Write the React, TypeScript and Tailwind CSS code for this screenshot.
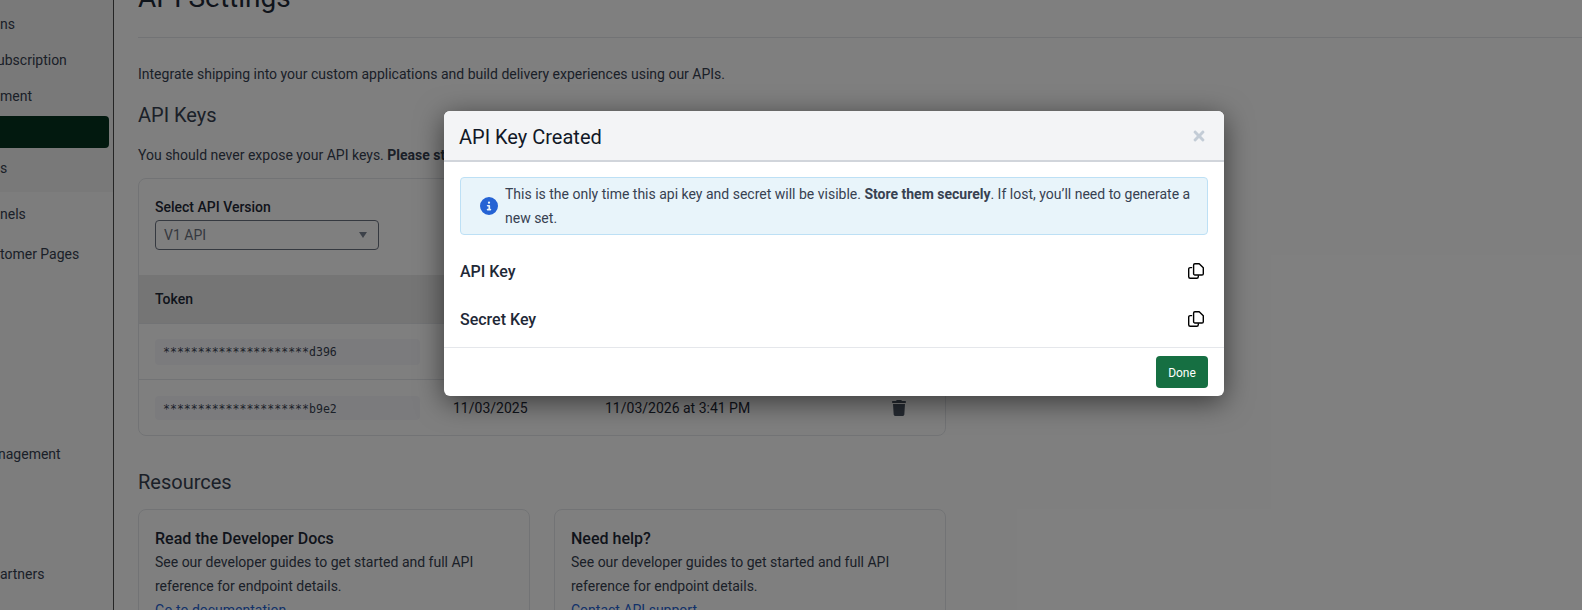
import { FaTimes } from "react-icons/fa";
import { FaCircleInfo, FaTrash } from "react-icons/fa6";

const TOKENS = [
    { token: "*********************d396", created: "11/03/2025", expires: "11/03/2026 at 3:41 PM", height: "h-[56px]", pill: "h-[26px]" },
    { token: "*********************b9e2", created: "11/03/2025", expires: "11/03/2026 at 3:41 PM", height: "h-[57px]", pill: "h-[24px]" },
];

const RESOURCES = [
    { title: "Read the Developer Docs", link: "Go to documentation" },
    { title: "Need help?", link: "Contact API support" },
];

function CopyIcon() {
    return (
        <svg className="mr-1 -mt-[2px]" width="16" height="16" viewBox="0 0 16 16" fill="none" stroke="#000" strokeWidth="1.4" strokeLinejoin="round" strokeLinecap="round">
            <path d="M5.6 2a1.3 1.3 0 0 1 1.3-1.3h4.3l4.1 4.1v5.9a1.3 1.3 0 0 1-1.3 1.3H6.9a1.3 1.3 0 0 1-1.3-1.3z" />
            <path d="M3.6 4.6H2.2A1.5 1.5 0 0 0 .7 6.1v7.7a1.5 1.5 0 0 0 1.5 1.5h6.6a1.5 1.5 0 0 0 1.5-1.5v-1" />
        </svg>
    );
}

function Sidebar() {
    return (
        <aside className="h-[610px] w-[114px] shrink-0 overflow-hidden border-r border-[#4a4a4a] bg-[#fafafa] text-sm text-[#374151]">
            <div className="h-[192px] bg-[#f3f3f3] pt-[14px]">
                <p className="h-5 leading-5">ns</p>
                <p className="mt-4 -ml-[3px] h-5 leading-5">ubscription</p>
                <p className="mt-4 h-5 leading-5">ment</p>
                <div className="mt-[10px] mr-[4px] h-[32px] rounded-r bg-[#04331f]"></div>
                <p className="mt-[10px] h-5 leading-5">s</p>
            </div>
            <p className="mt-3 h-5 leading-5">nels</p>
            <p className="mt-5 h-5 leading-5">tomer Pages</p>
            <p className="mt-[180px] -ml-[2px] h-5 leading-5">nagement</p>
            <p className="mt-[100px] h-5 leading-5">artners</p>
        </aside>
    );
}

function ApiKeysCard() {
    return (
        <div className="mt-3 h-[258px] w-[808px] overflow-hidden rounded-lg border border-[#e5e7eb] bg-white">
            <div className="px-4 pt-[18px]">
                <p className="h-5 text-sm leading-5 font-medium text-[#1f2937]">Select API Version</p>
                <div className="mt-[3px] flex h-[30px] w-[224px] items-center justify-between rounded border border-[#6b7280] px-2 text-sm text-[#6b7280]">
                    <span>V1 API</span>
                    <span className="mr-[3px] size-0 border-x-[4.5px] border-t-[6px] border-x-transparent border-t-[#7b8494]"></span>
                </div>
            </div>
            <div className="mt-[25px] grid h-[48px] grid-cols-[298px_152px_286px_1fr] items-center bg-[#ebebeb] pl-4 text-sm font-medium text-[#1f2937]">
                <span>Token</span>
                <span>Created</span>
                <span>Expires</span>
            </div>
            {TOKENS.map((row, index) => (
                <div
                    key={index}
                    className={`grid ${row.height} grid-cols-[298px_152px_286px_1fr] items-center border-t border-[#e5e7eb] pl-4 text-sm text-[#1f2937]`}
                >
                    <div className={`flex ${row.pill} w-[265px] items-center rounded bg-[#f6f7fa] px-2 pt-[2px] font-["DejaVu_Sans_Mono",monospace] text-[11.55px] text-[#374151]`}>
                        {row.token}
                    </div>
                    <span>{row.created}</span>
                    <span>{row.expires}</span>
                    <FaTrash className="size-4 text-[#4b5563]" />
                </div>
            ))}
        </div>
    );
}

function CreatedModal() {
    return (
        <div className="absolute inset-0 bg-black/50">
            <div className="absolute top-[111px] left-[444px] w-[780px] overflow-hidden rounded-md bg-white shadow-[0_6px_28px_rgba(0,0,0,0.55)]">
                <div className="flex h-[51px] items-center justify-between border-b-2 border-[#d1d5db] bg-[#f3f4f6] pr-[17px] pl-[15px]">
                    <h3 className="pt-[2px] text-xl text-[#111827]">API Key Created</h3>
                    <FaTimes className="size-[16px] text-[#c3ccd6]" />
                </div>
                <div className="px-4 pt-[15px]">
                    <div className="flex h-[58px] items-center gap-[7px] rounded border border-[#bde0f5] bg-[#e8f4fa] pr-4 pl-[19px] text-sm leading-6 text-[#374151]">
                        <FaCircleInfo className="size-[18px] shrink-0 text-[#2563d4]" />
                        <p>
                            This is the only time this api key and secret will be visible. <strong className="font-bold">Store them securely</strong>. If lost, you’ll need to generate a new set.
                        </p>
                    </div>
                    <div className="mt-[13px] flex h-[48px] items-center justify-between text-base font-medium text-[#1f2937]">
                        <span>API Key</span>
                        <CopyIcon />
                    </div>
                    <div className="flex h-[48px] items-center justify-between text-base font-medium text-[#1f2937]">
                        <span>Secret Key</span>
                        <CopyIcon />
                    </div>
                </div>
                <div className="mt-[3px] flex h-[49px] items-center justify-end border-t border-[#e5e7eb] px-4">
                    <button className="h-[32px] w-[52px] rounded bg-[#166f42] pt-[2px] text-xs text-white">Done</button>
                </div>
            </div>
        </div>
    );
}

function App() {
    return (
        <div className="relative flex h-[610px] overflow-hidden bg-white font-['Roboto',sans-serif]">
            <Sidebar />
            <main className="min-w-0 flex-1 pl-[24px]">
                <div className="-mt-[20px]">
                    <h1 className="h-[36px] text-[28px] leading-9 text-[#1f2937]">API Settings</h1>
                    <hr className="mt-[21px] border-[#e5e7eb]" />
                    <p className="mt-6 h-6 text-sm leading-6 text-[#374151]">Integrate shipping into your custom applications and build delivery experiences using our APIs.</p>
                    <h2 className="mt-[15px] h-7 text-xl leading-7 text-[#374151]">API Keys</h2>
                    <p className="mt-[14px] h-6 text-sm leading-6 text-[#374151]">
                        You should never expose your API keys. <strong className="font-bold">Please store them securely.</strong>
                    </p>
                    <div className="-mt-px">
                        <ApiKeysCard />
                    </div>
                    <h2 className="mt-8 h-7 text-xl leading-7 text-[#374151]">Resources</h2>
                    <div className="mt-[13px] flex w-[808px] gap-6">
                        {RESOURCES.map((resource, index) => (
                            <div key={index} className="h-[140px] w-[392px] rounded-lg border border-[#e5e7eb] bg-white px-4 pt-4">
                                <h4 className="pt-px text-base leading-[23px] font-medium text-[#1f2937]">{resource.title}</h4>
                                <p className="text-sm leading-6 text-[#374151]">See our developer guides to get started and full API reference for endpoint details.</p>
                                <a className="text-sm leading-6 text-[#2563d4] underline">{resource.link}</a>
                            </div>
                        ))}
                    </div>
                </div>
            </main>
            <CreatedModal />
        </div>
    );
}

export default App;
